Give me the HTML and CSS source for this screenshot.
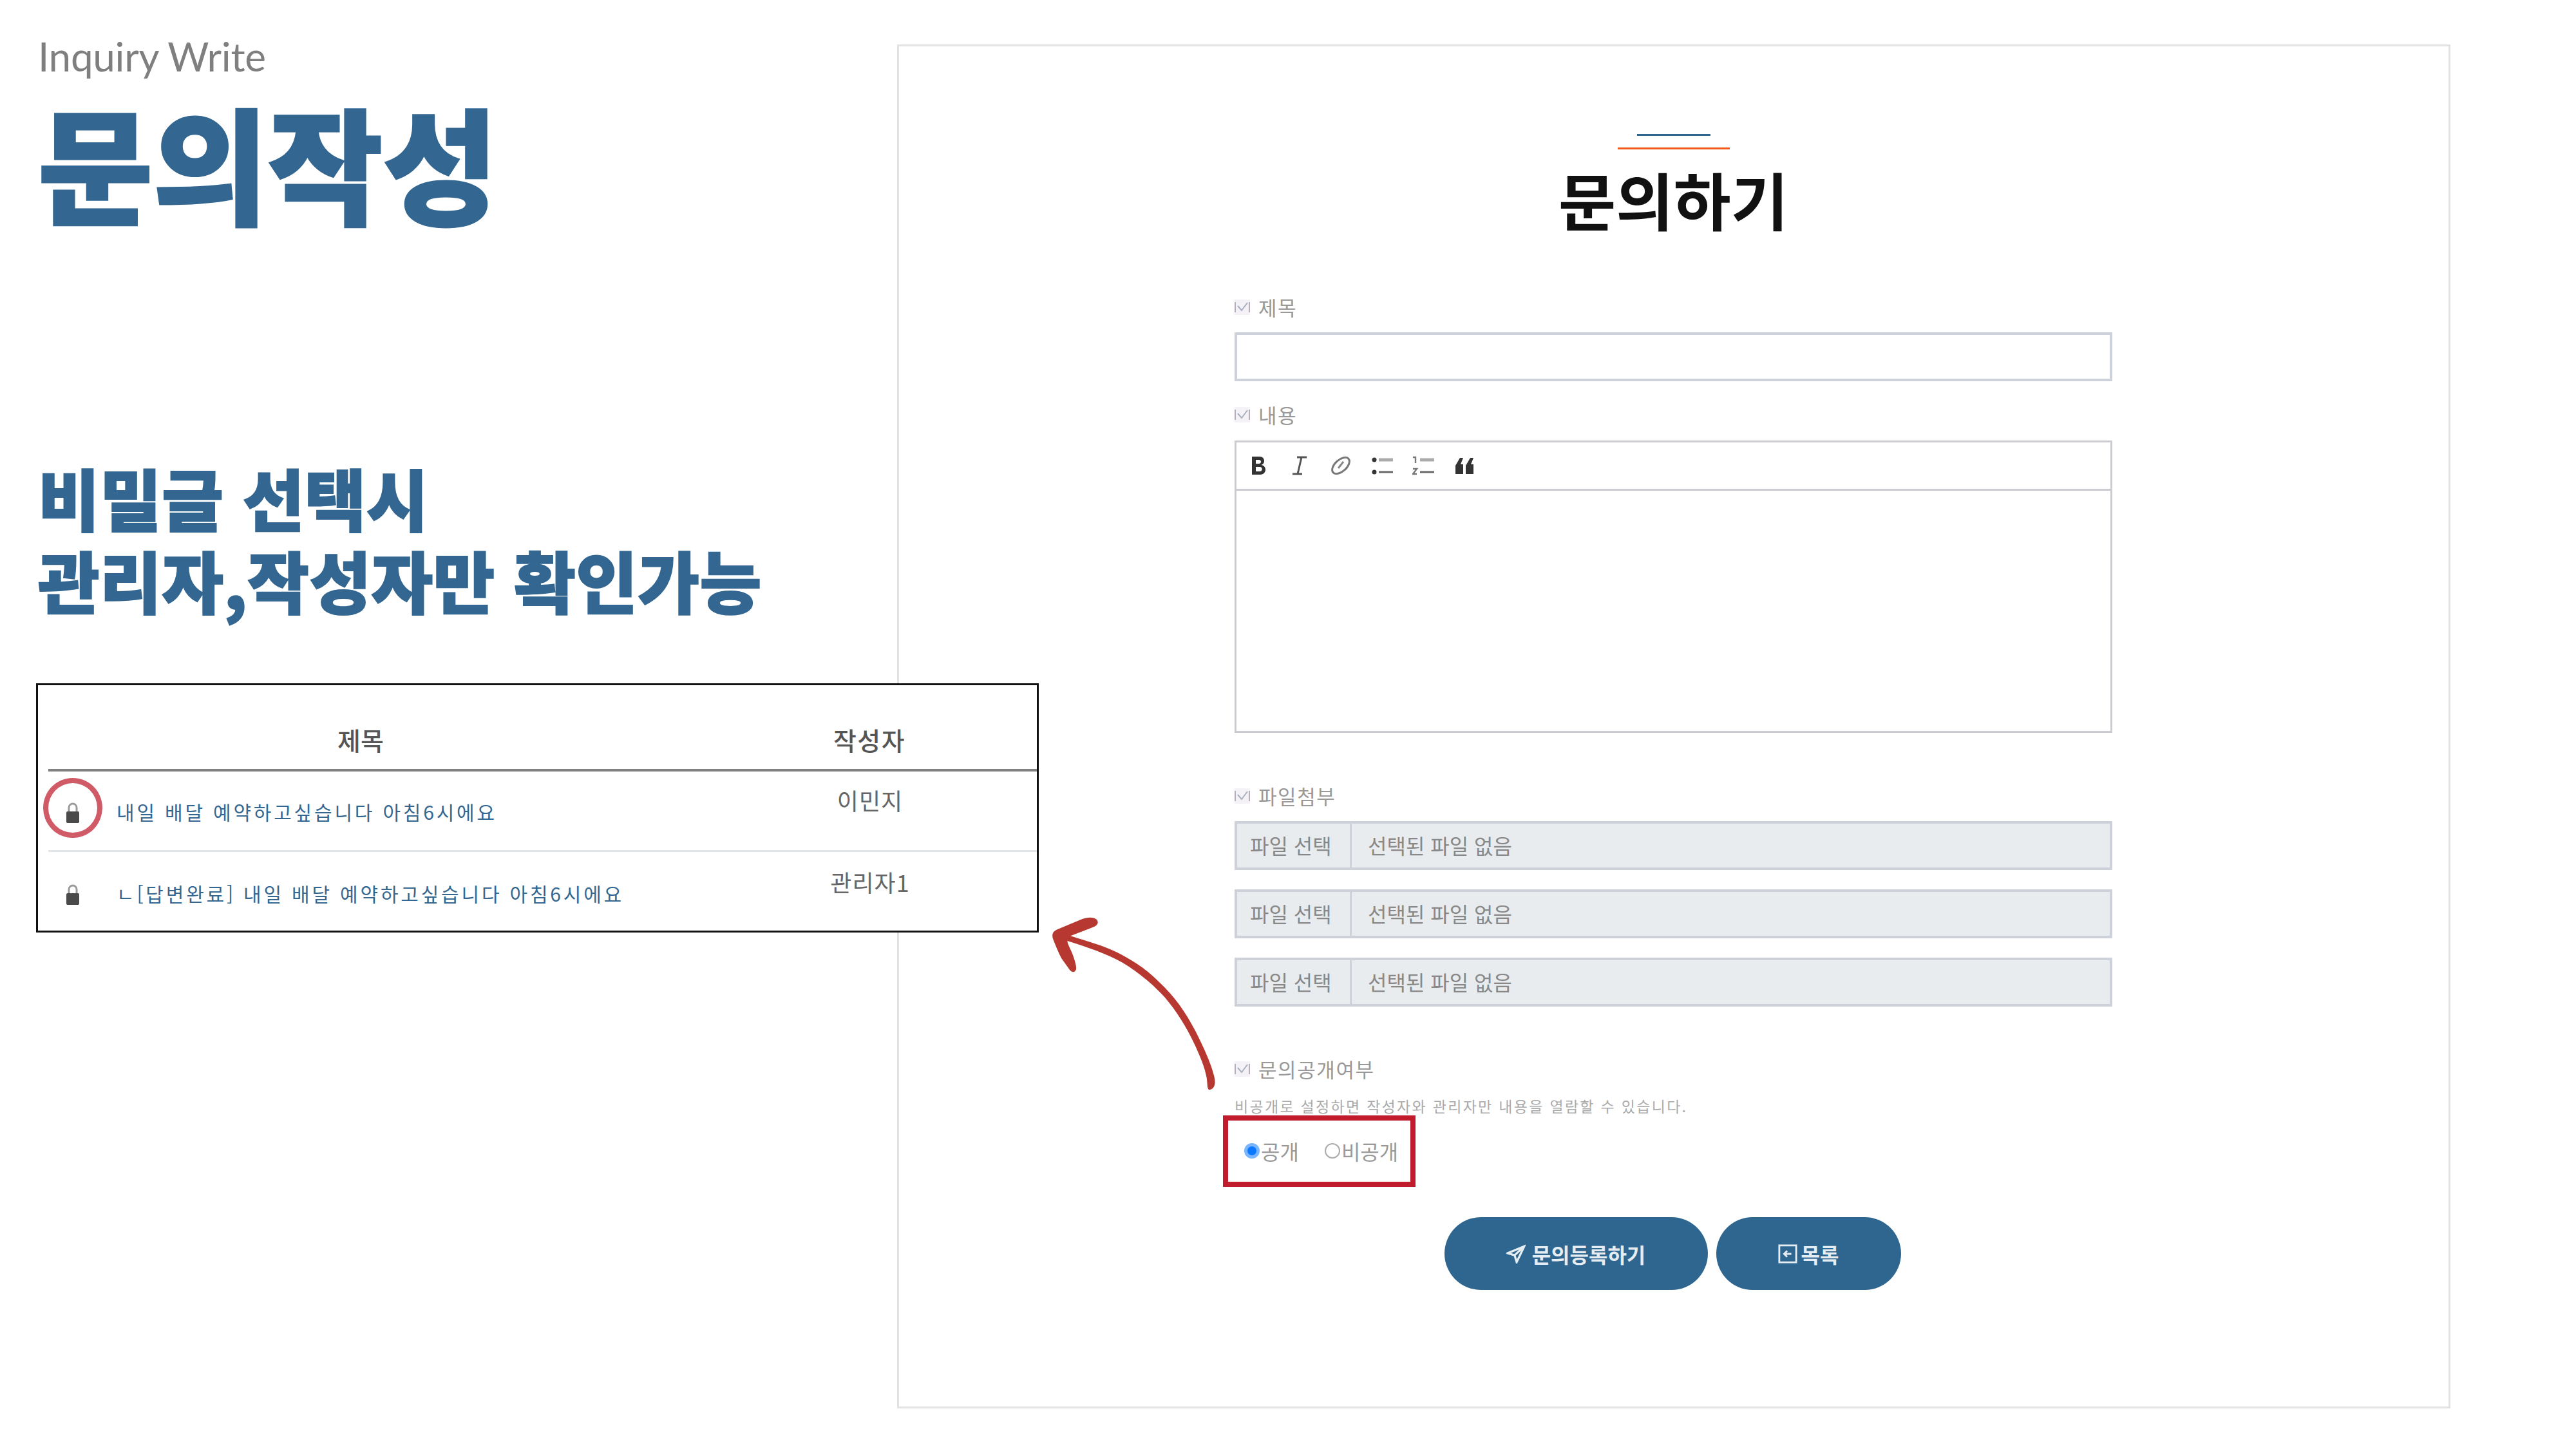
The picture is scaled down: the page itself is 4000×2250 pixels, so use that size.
FILE: index.html
```html
<!DOCTYPE html>
<html lang="ko">
<head>
<meta charset="utf-8">
<title>문의작성</title>
<link rel="stylesheet" href="styles.css">
</head>
<body>
<div class="slide">
  <section class="intro">
    <div class="eyebrow">Inquiry Write</div>
    <h1 class="headline">문의작성</h1>
    <p class="subhead">비밀글 선택시<br>관리자,작성자만 확인가능</p>
  </section>

  <section class="panel">
    <div class="rule-blue"></div>
    <div class="rule-orange"></div>
    <h2 class="form-title">문의하기</h2>
    <form class="form">
      <div class="label lab-title"><svg class="check" viewBox="0 0 24 28"><path d="M0 2h24v24H0z" fill="#f4f2f6"/><path d="M1 6v16M23 6v16" stroke="#b9aebd" stroke-width="2"/><path d="M5 12l6 7 9-12" fill="none" stroke="#a8b0c0" stroke-width="2"/></svg>제목</div>
      <div class="input"></div>
      <div class="label lab-body"><svg class="check" viewBox="0 0 24 28"><path d="M0 2h24v24H0z" fill="#f4f2f6"/><path d="M1 6v16M23 6v16" stroke="#b9aebd" stroke-width="2"/><path d="M5 12l6 7 9-12" fill="none" stroke="#a8b0c0" stroke-width="2"/></svg>내용</div>
      <div class="editor">
        <div class="toolbar">
          <svg class="tool tool-b" viewBox="0 0 24 30"><path d="M2 1h12c9 0 9 12 2 13 10 1 9 15-1 15H2zM8 6v6h5c4 0 4-6 0-6zM8 17v7h6c5 0 5-7 0-7z" fill="#333" fill-rule="evenodd"/></svg>
          <svg class="tool tool-i" viewBox="0 0 24 30"><path d="M8 2h15M1 28h15M15 2L9 28" fill="none" stroke="#555" stroke-width="3"/></svg>
          <svg class="tool tool-link" viewBox="0 0 32 30"><ellipse cx="16" cy="15" rx="16" ry="9" transform="rotate(-42 16 15)" fill="none" stroke="#777" stroke-width="3"/><path d="M12 19L20 9" stroke="#888" stroke-width="3"/></svg>
          <svg class="tool tool-list" viewBox="0 0 34 30"><path d="M12 6h22" stroke="#aaa" stroke-width="5"/><path d="M12 25h22" stroke="#666" stroke-width="3"/><circle cx="5" cy="6" r="3.5" fill="#333"/><circle cx="5" cy="25" r="3.5" fill="#333"/></svg>
          <svg class="tool tool-list" viewBox="0 0 34 30"><path d="M12 6h22" stroke="#aaa" stroke-width="5"/><path d="M12 25h22" stroke="#666" stroke-width="3"/><path d="M1 2h4v9M1 20h6l-6 8h6" fill="none" stroke="#777" stroke-width="2.4"/></svg>
          <svg class="tool tool-q" viewBox="0 0 30 30"><path d="M1 28V15L8 3h5l-4 10h4v15zM17 28V15l7-12h5l-4 10h4v15z" fill="#333"/></svg>
        </div>
        <div class="editor-body"></div>
      </div>
      <div class="label lab-file"><svg class="check" viewBox="0 0 24 28"><path d="M0 2h24v24H0z" fill="#f4f2f6"/><path d="M1 6v16M23 6v16" stroke="#b9aebd" stroke-width="2"/><path d="M5 12l6 7 9-12" fill="none" stroke="#a8b0c0" stroke-width="2"/></svg>파일첨부</div>
      <div class="files">
        <div class="file"><span class="file-btn">파일 선택</span><span class="file-name">선택된 파일 없음</span></div>
        <div class="file"><span class="file-btn">파일 선택</span><span class="file-name">선택된 파일 없음</span></div>
        <div class="file"><span class="file-btn">파일 선택</span><span class="file-name">선택된 파일 없음</span></div>
      </div>
      <div class="label lab-open"><svg class="check" viewBox="0 0 24 28"><path d="M0 2h24v24H0z" fill="#f4f2f6"/><path d="M1 6v16M23 6v16" stroke="#b9aebd" stroke-width="2"/><path d="M5 12l6 7 9-12" fill="none" stroke="#a8b0c0" stroke-width="2"/></svg>문의공개여부</div>
      <p class="note">비공개로 설정하면 작성자와 관리자만 내용을 열람할 수 있습니다.</p>
      <div class="radios">
        <span class="radio"><i class="dot dot-on"></i>공개</span>
        <span class="radio"><i class="dot"></i>비공개</span>
      </div>
      <div class="actions">
        <span class="btn btn-send"><svg class="btn-icon" viewBox="0 0 28 28"><path d="M26 3L2 13l10 3 3 10z M12 16L26 3" fill="none" stroke="#e6edf2" stroke-width="3"/></svg>문의등록하기</span>
        <span class="btn btn-list"><svg class="btn-icon" viewBox="0 0 32 32"><rect x="2" y="2" width="28" height="28" fill="none" stroke="#e6edf2" stroke-width="3"/><path d="M22 16H10M15 11l-5 5 5 5" fill="none" stroke="#e6edf2" stroke-width="3"/></svg>목록</span>
      </div>
    </form>
  </section>

  <div class="card">
    <div class="card-head"><span class="col-title">제목</span><span class="col-author">작성자</span></div>
    <div class="card-row">
      <svg class="lock" viewBox="0 0 22 34"><path d="M5 16V9a6 6 0 0 1 12 0v7" fill="none" stroke="#9a9a9a" stroke-width="3"/><rect x="1" y="15" width="20" height="18" rx="2" fill="#4a4a4a"/></svg>
      <span class="post">내일 배달 예약하고싶습니다 아침6시에요</span>
      <span class="author">이민지</span>
    </div>
    <div class="card-row card-row-last">
      <svg class="lock" viewBox="0 0 22 34"><path d="M5 16V9a6 6 0 0 1 12 0v7" fill="none" stroke="#9a9a9a" stroke-width="3"/><rect x="1" y="15" width="20" height="18" rx="2" fill="#4a4a4a"/></svg>
      <span class="post">ㄴ[답변완료] 내일 배달 예약하고싶습니다 아침6시에요</span>
      <span class="author">관리자1</span>
    </div>
    <div class="lock-ring"></div>
  </div>

  <svg class="arrow" viewBox="0 0 960 960"><path d="M835 877C822 875 826 855 821 820C812 770 790 720 765 665C725 580 680 510 625 445C570 385 505 330 430 285C360 245 260 210 172 183C175 205 190 225 198 250C207 275 215 300 213 315C208 332 192 330 183 318L145 265C130 235 115 200 104 170C100 150 105 140 125 130L240 82C265 72 295 70 310 85C320 100 310 112 290 120L187 160C270 187 340 205 400 235C480 275 540 315 600 375C670 440 720 510 770 605C805 675 840 750 855 810C865 845 860 870 835 877Z" fill="#b73830"/></svg>
  <div class="red-box"></div>
</div>
</body>
</html>
```

FILE: styles.css
```css
* { box-sizing: border-box; }
html, body { margin: 0; padding: 0; background: #fff; }
body { font-family: "Noto Sans CJK KR", "Noto Sans", sans-serif; }
.slide { position: relative; width: 4000px; height: 2250px; display: flex; overflow: hidden; padding-top: 69px; }

.intro { width: 1393px; padding-left: 59px; margin-top: -69px; flex: none; }
.eyebrow { font-family: Lato, "Noto Sans", sans-serif; font-size: 62px; font-weight: 400; letter-spacing: -.3px; line-height: 70px; color: #7f7f7f; padding-top: 52px; }
.headline { margin: 13px 0 0; font-size: 194px; line-height: 230px; font-weight: 900; color: #336791; letter-spacing: 0; -webkit-text-stroke: 3px #336791; }
.subhead { margin: 343px 0 0; font-size: 104px; line-height: 128px; font-weight: 900; color: #336791; letter-spacing: .4px; -webkit-text-stroke: 2px #336791; }

.panel { width: 2412px; height: 2118px; border: 3px solid #e3e3e3; flex: none; display: flex; flex-direction: column; align-items: center; padding: 136px 1px 0 0; }
.rule-blue { width: 114px; height: 3px; background: #2f6690; }
.rule-orange { width: 174px; height: 3px; background: #f05a10; margin-top: 18px; }
.form-title { margin: 16px 0 0; font-size: 97px; line-height: 120px; font-weight: 700; color: #111; }
.form { width: 1363px; display: flex; flex-direction: column; }

.label { display: flex; align-items: center; gap: 13px; font-size: 31px; line-height: 30px; color: #999; letter-spacing: 1.6px; }
.check { width: 24px; height: 28px; flex: none; }
.lab-title { margin-top: 94px; }
.lab-body { margin-top: 37px; }
.lab-file { margin-top: 83px; }
.lab-open { margin-top: 82px; }

.input { height: 76px; border: 4px solid #cdd1d9; margin-top: 24px; }
.editor { height: 454px; border: 3px solid #cbccd2; margin-top: 25px; display: flex; flex-direction: column; }
.toolbar { height: 75px; border-bottom: 3px solid #cbccd2; display: grid; grid-template-columns: repeat(6, 64px); align-items: center; justify-items: center; padding-left: 2px; flex: none; }
.tool { height: 30px; display: block; }
.tool-b, .tool-i { width: 24px; }
.tool-link { width: 32px; }
.tool-list { width: 34px; }
.tool-q { width: 30px; }
.editor-body { flex: 1; }

.files { display: flex; flex-direction: column; gap: 30px; margin-top: 24px; }
.file { height: 76px; background: #e9ecef; border: 4px solid #cdd1d9; display: flex; align-items: center; font-size: 32px; color: #888; padding-bottom: 3px; }
.file-btn { width: 178px; height: calc(100% + 3px); margin-bottom: -3px; border-right: 3px solid #cfd2d8; display: flex; align-items: center; padding: 0 0 3px 20px; }
.file-name { padding-left: 25px; }

.note { margin: 28px 0 0; font-size: 23px; line-height: 28px; color: #aaa; letter-spacing: 2.3px; }
.radios { display: flex; gap: 40px; padding: 36px 0 0 15px; height: 94px; font-size: 32px; line-height: 40px; color: #999; }
.radio { display: flex; align-items: center; gap: 2px; height: 40px; }
.dot { width: 24px; height: 24px; border-radius: 50%; border: 2px solid #aaa; display: block; }
.dot-on { background: #0a78ff; border: 5px solid #7ab6ff; }

.actions { display: flex; justify-content: center; gap: 13px; margin-top: 65px; padding-right: 3px; }
.btn { height: 113px; border-radius: 57px; background: #2f6690; color: #e6edf2; font-size: 32px; font-weight: 700; display: flex; align-items: center; justify-content: center; gap: 10px; }
.btn-send { width: 409px; }
.btn-list { width: 287px; gap: 6px; }
.btn-icon { width: 30px; height: 30px; }

.card { position: absolute; left: 56px; top: 1061px; width: 1557px; height: 387px; background: #fff; border: 3px solid #111; padding: 0 0 0 16px; }
.card-head { height: 134px; border-bottom: 4px solid #808080; position: relative; display: flex; align-items: center; font-size: 39px; color: #555; font-weight: 500; padding-top: 38px; }
.col-title { width: 970px; text-align: center; flex: none; }
.col-author { width: 520px; margin-left: 45px; text-align: center; letter-spacing: 1.5px; flex: none; }
.card-row { height: 125px; border-bottom: 3px solid #e2e6e9; display: flex; align-items: center; }
.card-row-last { border-bottom: 0; }
.lock { width: 22px; height: 34px; margin-left: 27px; margin-top: 6px; flex: none; }
.post { font-size: 30px; color: #336791; width: 870px; margin-left: 57px; letter-spacing: 3.8px; flex: none; white-space: nowrap; margin-top: 2px; }
.author { font-size: 36px; color: #666; width: 330px; text-align: center; margin-left: 135px; margin-top: -34px; letter-spacing: 1px; flex: none; }
.lock-ring { position: absolute; left: 8px; top: 144px; width: 92px; height: 93px; border: 8px solid #d05a66; border-radius: 50%; }

.arrow { position: absolute; left: 1600px; top: 1400px; width: 320px; height: 320px; }
.red-box { position: absolute; left: 1899px; top: 1732px; width: 299px; height: 111px; border: 8px solid #c01c2e; }
```
